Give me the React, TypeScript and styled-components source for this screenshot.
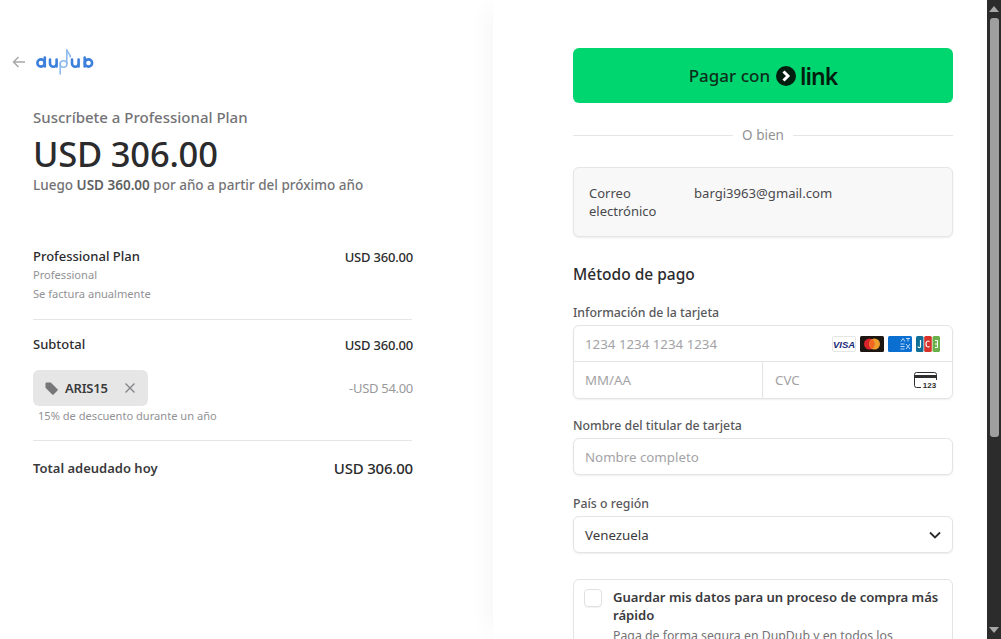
import React from "react";
import styled, { createGlobalStyle } from "styled-components";

const Global = createGlobalStyle`
  html, body { margin: 0; padding: 0; height: 639px; overflow: hidden; background: #fff; }
  * { box-sizing: border-box; }
  body { font-family: "Noto Sans", "Open Sans", "Liberation Sans", sans-serif; color: #1a1a1a; }
`;
const Page = styled.div`display: flex; width: 1001px; height: 639px; overflow: hidden;`;
const Summary = styled.section`width: 493px; flex: none; padding: 48px 80px 0 12px; background: #fff;`;
const TopBar = styled.div`display: flex; align-items: center; gap: 10px; height: 28px;`;
const Details = styled.div`margin: 31px 0 0 21px; width: 380px;`;
const Eyebrow = styled.div`font-size: 15px; font-weight: 500; color: #737376; line-height: 20px;`;
const Price = styled.div`font-size: 34.5px; font-weight: 500; color: #2b2b2d; line-height: 44px; margin-top: 5px; letter-spacing: -0.2px;`;
const Later = styled.div`font-size: 13.5px; font-weight: 500; color: #737376; line-height: 18px; b { font-weight: 600; color: #5f5f62; }`;
const Items = styled.div`margin-top: 53px;`;
const Row = styled.div<{ $mt?: number }>`display: flex; justify-content: space-between; align-items: center; margin-top: ${(p) => p.$mt ?? 0}px;`;
const Strong = styled.span`font-size: 13px; font-weight: 500; color: #2b2b2d; line-height: 19px;`;
const Amount = styled.span`font-size: 13px; font-weight: 500; color: #2b2b2d; letter-spacing: -0.2px;`;
const Small = styled.div<{ $lh?: number }>`font-size: 11.1px; color: #929295; line-height: ${(p) => p.$lh ?? 19}px;`;
const Rule = styled.hr<{ $mt: number }>`border: 0; border-top: 1px solid #e6e6e6; margin: ${(p) => p.$mt}px 0 0; width: 379px;`;
const Tag = styled.div`display: inline-flex; align-items: center; height: 36px; width: 115px; padding-left: 12px; background: #e6e6e6; border-radius: 6px; font-size: 13px; font-weight: 600; color: #3a3a3c; letter-spacing: -0.2px;`;
const TagLabel = styled.span`margin-left: 7px; width: 47px; flex: none;`;
const Discount = styled.span`font-size: 13px; color: #99999c; letter-spacing: -0.3px;`;
const DiscountNote = styled(Small)`margin: 0 0 0 5px;`;
const TotalLabel = styled(Strong)`font-weight: 600; color: #3a3a3c;`;
const TotalAmount = styled.span`font-size: 15px; font-weight: 500; color: #2b2b2d; letter-spacing: -0.2px;`;

const Pay = styled.section`
  width: 494px; flex: none; padding: 48px 34px 0 80px; background: #fff;
  box-shadow: -12px 0 24px -10px rgba(0,0,0,.05);
`;
const LinkButton = styled.div`height: 55px; border-radius: 6px; background: #00d66f; display: flex; align-items: center; justify-content: center; color: #0c2e1c; font-size: 17px; font-weight: 500;`;
const LinkWord = styled.span`font-size: 23px; font-weight: 600; color: #011e0f; letter-spacing: -1px; margin-left: 2px; line-height: 24px;`;
const Divider = styled.div`display: flex; align-items: center; gap: 9px; margin-top: 22px; height: 20px; font-size: 13.5px; color: #929295; &::before, &::after { content: ""; flex: 1; border-top: 1px solid #e6e6e6; }`;
const EmailBox = styled.div`margin-top: 22px; height: 70px; display: flex; padding: 16px 15px 0; background: #f8f8f9; border: 1px solid #e6e6e6; border-radius: 6px; box-shadow: 0 1px 2px rgba(0,0,0,.08); font-size: 13px; line-height: 18px; color: #4a4a4d;`;
const EmailLabel = styled.div`width: 105px; flex: none;`;
const EmailValue = styled.div`font-size: 13.1px;`;
const Heading = styled.h2`margin: 26px 0 0; font-size: 15.5px; font-weight: 500; line-height: 22px; color: #2b2b2d;`;
const Label = styled.div<{ $mt: number }>`margin-top: ${(p) => p.$mt}px; font-size: 12.3px; font-weight: 500; line-height: 18px; color: #58585b; margin-bottom: 3px;`;
const Field = styled.div`height: 37px; display: flex; align-items: center; justify-content: space-between; padding: 0 11px 0 11px; background: #fff; border: 1px solid #e4e4e6; border-radius: 6px; box-shadow: 0 1px 2px rgba(0,0,0,.07); font-size: 13.3px; color: #a3a3a6;`;
const Card = styled.div`border: 1px solid #e4e4e6; border-radius: 6px; box-shadow: 0 1px 2px rgba(0,0,0,.07); font-size: 13.3px; color: #a3a3a6; height: 74px;`;
const CardRow = styled.div`height: 36px; display: flex; align-items: center; justify-content: space-between; padding: 0 11px; border-bottom: 1px solid #e4e4e6;`;
const CardSplit = styled.div`display: flex; height: 36px;`;
const CardCell = styled.div<{ $w: number }>`width: ${(p) => p.$w}px; display: flex; align-items: center; justify-content: space-between; padding: 0 14px 0 12px; &:first-child { padding-left: 11px; } & + & { border-left: 1px solid #e4e4e6; }`;
const Brands = styled.div`display: flex; gap: 4px; margin-right: 1px;`;
const Value = styled.span`color: #3a3a3c;`;
const Save = styled.div`margin-top: 26px; height: 90px; padding: 8px 8px 0 10px; border: 1px solid #e4e4e6; border-radius: 6px; display: flex; gap: 11px;`;
const Check = styled.div`width: 18px; height: 18px; flex: none; margin-top: 1px; border: 1px solid #e0e0e2; border-radius: 4px; box-shadow: 0 1px 1px rgba(0,0,0,.05);`;
const SaveTitle = styled.div`font-size: 13.1px; font-weight: 600; line-height: 18px; color: #3a3a3c;`;
const SaveText = styled.div`font-size: 12.3px; line-height: 18px; color: #737376; margin-top: 3px;`;

const Scrollbar = styled.div`width: 14px; flex: none; height: 639px; background: #2c2c2c; display: flex; flex-direction: column; align-items: center; position: relative;`;
const Thumb = styled.div`width: 9px; height: 419px; margin-top: 18px; border-radius: 3px; background: #9f9f9f;`;
const ArrowUp = styled.div`position: absolute; top: 6px; width: 0; height: 0; border: 5px solid transparent; border-top: 0; border-bottom: 6px solid #a8a8a8;`;
const ArrowDown = styled.div`position: absolute; bottom: 6px; width: 0; height: 0; border: 5px solid transparent; border-bottom: 0; border-top: 6px solid #a8a8a8;`;

const Logo = () => (
  <svg width="58" height="28" viewBox="0 0 58 28" fill="none">
    <g stroke="#3c80dc" strokeWidth="2.6" strokeLinecap="round">
      <circle cx="5" cy="15" r="3.6" />
      <path d="M8.800 9.500v9" />
      <path d="M14 11.500v4a3.200 3.200 0 0 0 6.600 0v-4M20.600 11.500v7" />
      <path d="M36 11.500v4a3.200 3.200 0 0 0 6.600 0v-4M42.600 11.500v7" />
      <circle cx="52.500" cy="15" r="3.600" />
      <path d="M48.700 9.500v9" />
    </g>
    <g stroke="#8dbbee" strokeWidth="1.600" strokeLinecap="round">
      <circle cx="27.500" cy="16" r="3.300" />
      <path d="M30.800 2v14" />
      <path d="M30.800 2c.5 3 3.500 3.500 3.500 7" />
      <path d="M24.200 15v11" />
    </g>
  </svg>
);
const BackArrow = () => (
  <svg width="14" height="14" viewBox="0 0 14 14" fill="none" stroke="#a6a6a9" strokeWidth="1.400"><path d="M13 7H1.600M6.500 2 1.500 7l5 5" /></svg>
);
const TagIcon = () => (
  <svg width="13" height="13" viewBox="0 0 13 13" fill="#77777a"><path d="M0.500 1.500A1 1 0 0 1 1.500.5h4.300l6.700 6.700a1 1 0 0 1 0 1.400l-3.900 3.900a1 1 0 0 1-1.400 0L.5 5.800z" /></svg>
);
const CloseIcon = () => (
  <svg width="10" height="10" viewBox="0 0 10 10" stroke="#858588" strokeWidth="1.400" style={{ marginLeft: 13 }}><path d="M.5.5l9 9M9.500.5l-9 9" /></svg>
);
const LinkMark = () => (
  <svg width="20" height="20" viewBox="0 0 20 20" style={{ margin: "0 2px 0 6px" }}>
    <circle cx="10" cy="10" r="10" fill="#011e0f" />
    <path d="M7.500 5.500 12 10l-4.500 4.500" fill="none" stroke="#fff" strokeWidth="3" />
  </svg>
);
const Visa = () => (
  <svg width="24" height="16" viewBox="0 0 24 16">
    <rect x=".5" y=".5" width="23" height="15" rx="1.500" fill="#fff" stroke="#e6e6e6" />
    <text x="12" y="11.500" textAnchor="middle" fontSize="9.500" fontWeight="700" fontStyle="italic" fontFamily="Liberation Sans" fill="#1a2a78">VISA</text>
  </svg>
);
const Master = () => (
  <svg width="24" height="16" viewBox="0 0 24 16">
    <rect width="24" height="16" rx="1.500" fill="#1c1512" />
    <circle cx="9.500" cy="8" r="5.500" fill="#d9222a" />
    <circle cx="14.500" cy="8" r="5.500" fill="#ee9f2d" />
    <path d="M12 3.200a5.500 5.500 0 0 1 0 9.600 5.500 5.500 0 0 1 0-9.600z" fill="#f26522" />
  </svg>
);
const Amex = () => (
  <svg width="24" height="16" viewBox="0 0 24 16">
    <rect width="24" height="16" rx="1.500" fill="#0a6fd0" />
    <g stroke="#cfe4fa" strokeWidth=".9" fill="none">
      <path d="M13 5.500l2-3 2 3M18 2.500h4M20 2.500v3M12.500 8h4M12.500 10.500h4M12.500 13h4M18 8l4 5M22 8l-4 5" />
    </g>
  </svg>
);
const Jcb = () => (
  <svg width="24" height="16" viewBox="0 0 24 16">
    <rect width="7.500" height="16" rx="1.500" fill="#0f6f95" />
    <rect x="8.200" width="7.600" height="16" rx="1.500" fill="#d6322a" />
    <rect x="16.500" width="7.500" height="16" rx="1.500" fill="#6ab04a" />
    <path d="M4.500 4v6.500c0 1.500-2.500 1.500-2.500 0" stroke="#fff" strokeWidth="1.200" fill="none" />
    <path d="M13.500 5.500c-2-1.200-3.500 0-3.500 2.500s1.500 3.700 3.500 2.500" stroke="#fff" strokeWidth="1.200" fill="none" />
    <path d="M19 4.500h2.500v7H19M19 8h2.500" stroke="#fff" strokeWidth="1" fill="none" />
  </svg>
);
const Cvc = () => (
  <svg width="24" height="17" viewBox="0 0 24 17" fill="none">
    <path d="M7 15.500H2.500a2 2 0 0 1-2-2v-11a2 2 0 0 1 2-2h18a2 2 0 0 1 2 2V8" stroke="#2f2f2f" strokeWidth="1" />
    <rect x="0.500" y="3" width="22" height="3" fill="#2f2f2f" />
    <text x="15.500" y="16" textAnchor="middle" fontSize="8" fontWeight="700" fontFamily="Liberation Sans" fill="#2f2f2f">123</text>
  </svg>
);
const Chevron = () => (
  <svg width="12" height="8" viewBox="0 0 12 8" fill="none" stroke="#2b2b2d" strokeWidth="1.800"><path d="M1 1.500l5 5 5-5" /></svg>
);

export default function App() {
  return (
    <Page>
      <Global />
      <Summary>
        <TopBar><BackArrow /><Logo /></TopBar>
        <Details>
          <Eyebrow>Suscríbete a Professional Plan</Eyebrow>
          <Price>USD 306.00</Price>
          <Later>Luego <b>USD 360.00</b> por año a partir del próximo año</Later>
          <Items>
            <Row><Strong>Professional Plan</Strong><Amount>USD 360.00</Amount></Row>
            <Small $lh={18}>Professional</Small>
            <Small>Se factura anualmente</Small>
            <Rule $mt={16} />
            <Row $mt={15}><Strong>Subtotal</Strong><Amount>USD 360.00</Amount></Row>
            <Row $mt={16}>
              <Tag><TagIcon /><TagLabel>ARIS15</TagLabel><CloseIcon /></Tag>
              <Discount>-USD 54.00</Discount>
            </Row>
            <DiscountNote>15% de descuento durante un año</DiscountNote>
            <Rule $mt={15} />
            <Row $mt={17}><TotalLabel>Total adeudado hoy</TotalLabel><TotalAmount>USD 306.00</TotalAmount></Row>
          </Items>
        </Details>
      </Summary>
      <Pay>
        <LinkButton>Pagar con <LinkMark /><LinkWord>link</LinkWord></LinkButton>
        <Divider>O bien</Divider>
        <EmailBox>
          <EmailLabel>Correo electrónico</EmailLabel>
          <EmailValue>bargi3963@gmail.com</EmailValue>
        </EmailBox>
        <Heading>Método de pago</Heading>
        <Label $mt={19}>Información de la tarjeta</Label>
        <Card>
          <CardRow>
            1234 1234 1234 1234
            <Brands><Visa /><Master /><Amex /><Jcb /></Brands>
          </CardRow>
          <CardSplit>
            <CardCell $w={188}>MM/AA</CardCell>
            <CardCell $w={190}>CVC<Cvc /></CardCell>
          </CardSplit>
        </Card>
        <Label $mt={18}>Nombre del titular de tarjeta</Label>
        <Field>Nombre completo</Field>
        <Label $mt={20}>País o región</Label>
        <Field><Value>Venezuela</Value><Chevron /></Field>
        <Save>
          <Check />
          <div>
            <SaveTitle>Guardar mis datos para un proceso de compra más rápido</SaveTitle>
            <SaveText>Paga de forma segura en DupDub y en todos los comercios</SaveText>
          </div>
        </Save>
      </Pay>
      <Scrollbar><ArrowUp /><Thumb /><ArrowDown /></Scrollbar>
    </Page>
  );
}
